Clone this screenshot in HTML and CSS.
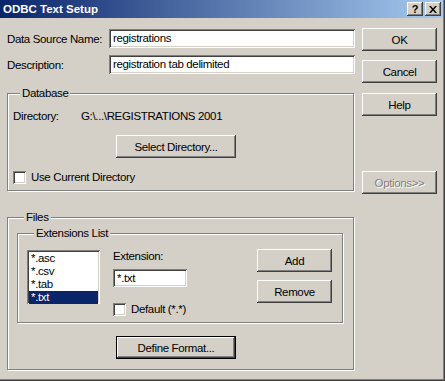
FILE: index.html
```html
<!DOCTYPE html>
<html lang="en">
<head>
    <meta charset="UTF-8">
    <title>ODBC Text Setup</title>
    <link rel="stylesheet" href="styles.css">
</head>
<body>
    <div class="window">
        <div class="titlebar">
            <span class="title">ODBC Text Setup</span>
            <div class="caption-buttons">
                <span class="cap-btn">?</span>
                <span class="cap-btn">
                    <svg width="8" height="7" viewBox="0 0 8 7">
                        <path d="M0 0h2l2 2.5 2-2.5h2l-3 3.5 3 3.5h-2l-2-2.5-2 2.5h-2l3-3.5z" fill="#000"/>
                    </svg>
                </span>
            </div>
        </div>

        <div class="client">
            <div class="main">
                <div class="field-row">
                    <span class="field-label">Data Source Name:</span>
                    <div class="textbox name">registrations</div>
                </div>
                <div class="field-row">
                    <span class="field-label">Description:</span>
                    <div class="textbox name">registration tab delimited</div>
                </div>

                <fieldset class="group database">
                    <legend>Database</legend>
                    <div class="dir-row">
                        <span class="dir-label">Directory:</span>
                        <span>G:\...\REGISTRATIONS 2001</span>
                    </div>
                    <button class="btn wide select-dir">Select Directory...</button>
                    <div class="check current-dir">
                        <span class="checkbox"></span>
                        <span>Use Current Directory</span>
                    </div>
                </fieldset>

                <fieldset class="group files">
                    <legend>Files</legend>
                    <fieldset class="group extensions">
                        <legend>Extensions List</legend>
                        <div class="ext-body">
                            <ul class="listbox">
                                <li>*.asc</li>
                                <li>*.csv</li>
                                <li>*.tab</li>
                                <li class="selected">*.txt</li>
                            </ul>
                            <div class="ext-col">
                                <span class="ext-label">Extension:</span>
                                <div class="textbox ext">*.txt</div>
                                <div class="check default-check">
                                    <span class="checkbox"></span>
                                    <span>Default (*.*)</span>
                                </div>
                            </div>
                            <div class="ext-buttons">
                                <button class="btn">Add</button>
                                <button class="btn">Remove</button>
                            </div>
                        </div>
                    </fieldset>
                    <button class="btn wide default define">Define Format...</button>
                </fieldset>
            </div>

            <div class="side">
                <button class="btn ok">OK</button>
                <button class="btn cancel">Cancel</button>
                <button class="btn help">Help</button>
                <button class="btn options" disabled>Options&gt;&gt;</button>
            </div>
        </div>
    </div>
</body>
</html>
```

FILE: styles.css
```css
* {
    margin: 0;
    padding: 0;
    box-sizing: border-box;
}

body {
    font-family: "Liberation Sans", Arial, sans-serif;
    font-size: 11.5px;
    letter-spacing: -0.35px;
    color: #000;
    background: #d4d0c8;
    white-space: nowrap;
}

.window {
    width: 445px;
    height: 381px;
    padding: 0 2px 2px 0;
    background: #d4d0c8;
    box-shadow: inset -1px -1px #404040, inset -2px -2px #808080;
}

.titlebar {
    height: 18px;
    display: flex;
    align-items: center;
    justify-content: space-between;
    padding: 0 2px 0 3px;
    background: linear-gradient(to right, #0a246a, #a6caf0);
}

.title {
    font-weight: bold;
    font-size: 11.5px;
    letter-spacing: 0;
    color: #fff;
}

.caption-buttons {
    display: flex;
    gap: 2px;
}

.cap-btn {
    width: 16px;
    height: 14px;
    display: flex;
    align-items: center;
    justify-content: center;
    background: #d4d0c8;
    font-weight: bold;
    font-size: 11px;
    letter-spacing: 0;
    box-shadow: inset -1px -1px #404040, inset 1px 1px #fff, inset -2px -2px #808080;
}

.client {
    display: flex;
    gap: 7px;
    padding-left: 7px;
}

.main {
    width: 348px;
    padding-top: 11px;
}

.field-row {
    display: flex;
    align-items: center;
    height: 19px;
}

.field-row + .field-row {
    margin-top: 7px;
}

.field-label {
    width: 102px;
}

.textbox {
    height: 19px;
    line-height: 19px;
    padding: 0 4px;
    background: #fff;
    box-shadow: inset 1px 1px #808080, inset -1px -1px #fff, inset 2px 2px #404040, inset -2px -2px #d4d0c8;
}

.textbox.name {
    width: 246px;
}

.textbox.ext {
    width: 74px;
    height: 18px;
    line-height: 18px;
    margin-top: 6px;
}

/* group boxes */
.group {
    border: 1px solid #808080;
    box-shadow: 1px 1px #fff, inset 1px 1px #fff;
}

.group legend {
    margin-left: 7px;
    padding: 0 2px;
    line-height: 13px;
    background: #d4d0c8;
}

.database {
    width: 347px;
    margin-top: 13px;
    padding: 10px 0 6px 5px;
}

.dir-row {
    display: flex;
    line-height: 13px;
}

.dir-label {
    width: 68px;
}

.files {
    width: 347px;
    margin-top: 20px;
    padding: 3px 0 10px 9px;
}

.extensions {
    width: 326px;
    padding: 10px 10px 6px 9px;
}

.ext-body {
    display: flex;
}

.listbox {
    width: 73px;
    height: 54px;
    padding: 2px;
    list-style: none;
    overflow: hidden;
    background: #fff;
    box-shadow: inset 1px 1px #808080, inset -1px -1px #fff, inset 2px 2px #404040, inset -2px -2px #d4d0c8;
}

.listbox li {
    height: 13px;
    line-height: 13px;
    padding-left: 2px;
}

.listbox li.selected {
    background: #0a246a;
    color: #fff;
}

.ext-col {
    display: flex;
    flex-direction: column;
    margin-left: 13px;
    flex: 1;
}

.ext-label {
    line-height: 13px;
}

.ext-buttons {
    display: flex;
    flex-direction: column;
    gap: 8px;
    margin-top: -1px;
}

/* check boxes */
.check {
    display: flex;
    align-items: center;
    gap: 5px;
    line-height: 13px;
}

.checkbox {
    width: 13px;
    height: 13px;
    background: #fff;
    box-shadow: inset 1px 1px #808080, inset -1px -1px #fff, inset 2px 2px #404040, inset -2px -2px #d4d0c8;
}

.current-dir {
    margin-top: 13px;
}

.default-check {
    margin-top: 16px;
}

/* buttons */
.btn {
    display: block;
    width: 75px;
    height: 23px;
    border: none;
    background: #d4d0c8;
    font: inherit;
    letter-spacing: inherit;
    color: #000;
    text-align: center;
    box-shadow: inset -1px -1px #404040, inset 1px 1px #fff, inset -2px -2px #808080;
}

.btn.wide {
    width: 120px;
}

.btn.default {
    box-shadow: inset 0 0 0 1px #000, inset -2px -2px #404040, inset 2px 2px #fff, inset -3px -3px #808080;
}

.btn:disabled {
    color: #808080;
    text-shadow: 1px 1px #fff;
}

.select-dir {
    margin: 12px 0 0 103px;
}

.define {
    margin: 13px 0 0 99px;
}

.side {
    width: 75px;
    display: flex;
    flex-direction: column;
}

.ok {
    margin-top: 10px;
}

.cancel {
    margin-top: 9px;
}

.help {
    margin-top: 10px;
}

.options {
    margin-top: 55px;
}
```
